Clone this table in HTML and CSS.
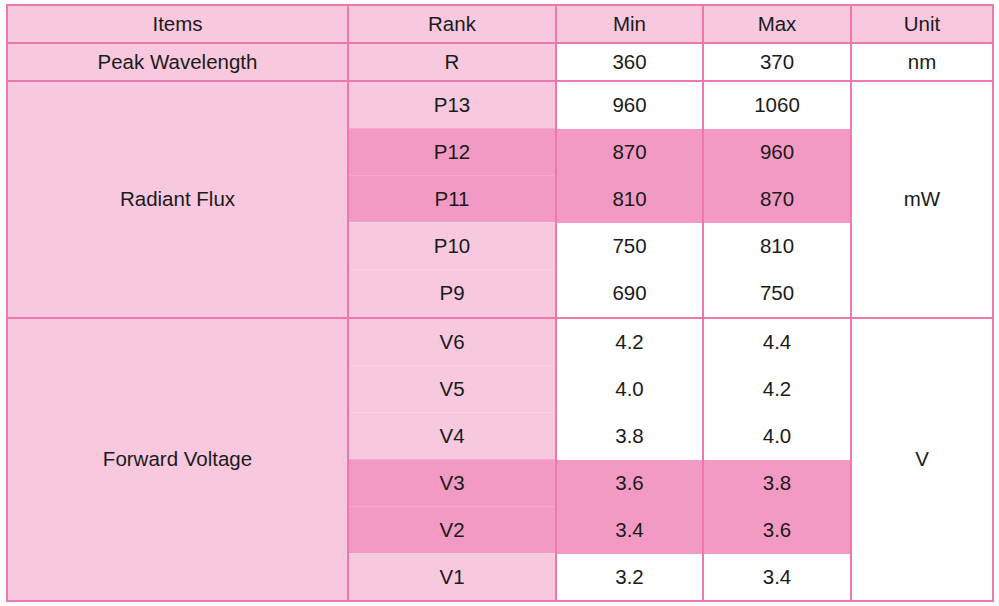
FILE: index.html
```html
<!DOCTYPE html>
<html>
<head>
<meta charset="utf-8">
<link rel="stylesheet" href="styles.css">
</head>
<body>
<table class="spec">
  <colgroup>
    <col class="c-items">
    <col class="c-rank">
    <col class="c-min">
    <col class="c-max">
    <col class="c-unit">
  </colgroup>
  <thead>
    <tr class="r-short">
      <th>Items</th><th>Rank</th><th>Min</th><th>Max</th><th>Unit</th>
    </tr>
  </thead>
  <tbody>
    <tr class="r-short">
      <td class="pink">Peak Wavelength</td><td class="pink">R</td><td>360</td><td>370</td><td>nm</td>
    </tr>
  </tbody>
  <tbody class="group">
    <tr class="r-sub">
      <td class="pink" rowspan="5">Radiant Flux</td><td class="pink rank">P13</td><td>960</td><td>1060</td><td rowspan="5">mW</td>
    </tr>
    <tr class="r-sub hl">
      <td class="rank">P12</td><td>870</td><td>960</td>
    </tr>
    <tr class="r-sub hl">
      <td class="rank">P11</td><td class="vsep">810</td><td class="vsep">870</td>
    </tr>
    <tr class="r-sub">
      <td class="pink rank">P10</td><td>750</td><td>810</td>
    </tr>
    <tr class="r-sub r-last">
      <td class="pink rank">P9</td><td>690</td><td>750</td>
    </tr>
  </tbody>
  <tbody class="group">
    <tr class="r-sub">
      <td class="pink" rowspan="6">Forward Voltage</td><td class="pink rank">V6</td><td>4.2</td><td>4.4</td><td rowspan="6">V</td>
    </tr>
    <tr class="r-sub">
      <td class="pink rank">V5</td><td>4.0</td><td>4.2</td>
    </tr>
    <tr class="r-sub">
      <td class="pink rank">V4</td><td>3.8</td><td>4.0</td>
    </tr>
    <tr class="r-sub hl">
      <td class="rank">V3</td><td>3.6</td><td>3.8</td>
    </tr>
    <tr class="r-sub hl">
      <td class="rank">V2</td><td>3.4</td><td>3.6</td>
    </tr>
    <tr class="r-sub">
      <td class="pink rank">V1</td><td>3.2</td><td>3.4</td>
    </tr>
  </tbody>
</table>
</body>
</html>
```
FILE: styles.css
```css
html, body {
  margin: 0;
  padding: 0;
  background: #ffffff;
}
body {
  padding: 4px 0 0 6px;
  font-family: "Liberation Sans", Arial, sans-serif;
}
.spec {
  border-collapse: collapse;
  table-layout: fixed;
  width: 986px;
  font-size: 20.5px;
  line-height: 1;
  color: #1b1b1b;
  border: 2px solid #ec78ad;
}
.c-items { width: 341px; }
.c-rank { width: 208px; }
.c-min { width: 147px; }
.c-max { width: 148px; }
.c-unit { width: 142px; }

.spec th, .spec td {
  border-left: 2px solid #ec78ad;
  border-right: 2px solid #ec78ad;
  padding: 0;
  text-align: center;
  vertical-align: middle;
  font-weight: normal;
  background: #ffffff;
}
.spec thead th {
  background: #f7c8de;
}
.r-short th, .r-short td {
  border-top: 2px solid #ec78ad;
  border-bottom: 2px solid #ec78ad;
  height: 36px;
}
.group {
  border-top: 2px solid #ec78ad;
  border-bottom: 2px solid #ec78ad;
}
.r-sub td {
  height: 46px;
}
.r-sub.r-last td {
  height: 47px;
}
.spec td.pink {
  background: #f7c8de;
}
.spec .hl td {
  background: #f29ac3;
}
.spec .r-sub td.rank {
  border-top: 1px solid #f9d3e5;
}
.spec .hl td.rank {
  border-top: 1px solid #f4a8cb;
}
.spec .hl td.vsep {
  border-left-color: #ff3fbf;
}
.spec .hl + .hl td {
  border-top-color: #f4a8cb;
}
```
